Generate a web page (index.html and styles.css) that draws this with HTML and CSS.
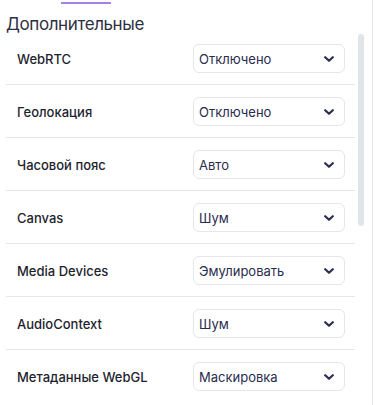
FILE: index.html
```html
<!DOCTYPE html>
<html lang="ru">
<head>
<meta charset="utf-8">
<link rel="stylesheet" href="styles.css">
</head>
<body>
<div class="layout">
  <main class="panel">
    <div class="tabs"><span class="tab-active"></span></div>
    <h2 class="title">Дополнительные</h2>
    <div class="body">
      <div class="list">
        <div class="row"><span class="label">WebRTC</span><div class="select"><span>Отключено</span><svg class="chev" viewBox="0 0 10 6"><path d="M1.2 1.2L5 4.8l3.8-3.6"/></svg></div></div>
        <div class="row"><span class="label">Геолокация</span><div class="select"><span>Отключено</span><svg class="chev" viewBox="0 0 10 6"><path d="M1.2 1.2L5 4.8l3.8-3.6"/></svg></div></div>
        <div class="row"><span class="label">Часовой пояс</span><div class="select"><span>Авто</span><svg class="chev" viewBox="0 0 10 6"><path d="M1.2 1.2L5 4.8l3.8-3.6"/></svg></div></div>
        <div class="row"><span class="label">Canvas</span><div class="select"><span>Шум</span><svg class="chev" viewBox="0 0 10 6"><path d="M1.2 1.2L5 4.8l3.8-3.6"/></svg></div></div>
        <div class="row"><span class="label">Media Devices</span><div class="select"><span>Эмулировать</span><svg class="chev" viewBox="0 0 10 6"><path d="M1.2 1.2L5 4.8l3.8-3.6"/></svg></div></div>
        <div class="row"><span class="label">AudioContext</span><div class="select"><span>Шум</span><svg class="chev" viewBox="0 0 10 6"><path d="M1.2 1.2L5 4.8l3.8-3.6"/></svg></div></div>
        <div class="row"><span class="label">Метаданные WebGL</span><div class="select"><span>Маскировка</span><svg class="chev" viewBox="0 0 10 6"><path d="M1.2 1.2L5 4.8l3.8-3.6"/></svg></div></div>
      </div>
      <div class="scroll"><div class="thumb"></div></div>
    </div>
  </main>
</div>
</body>
</html>
```
FILE: styles.css
```css
html, body {
  margin: 0;
  padding: 0;
  background: #ffffff;
  height: 100%;
  overflow: hidden;
}
body {
  font-family: Inter, "Noto Sans", sans-serif;
  color: #1f2030;
}
.layout {
  display: flex;
  height: 405px;
}
.panel {
  width: 366px;
  padding-left: 6px;
  border-right: 1px solid #e4e6eb;
  box-sizing: content-box;
}
.tabs {
  height: 4px;
  padding-top: 2px;
  box-sizing: border-box;
}
.tab-active {
  display: block;
  margin-left: 55px;
  width: 50px;
  height: 2px;
  background: #a77fe6;
}
.title {
  margin: 0;
  padding-top: 13px;
  height: 28px;
  box-sizing: border-box;
  font-size: 17px;
  line-height: 15px;
  font-weight: 400;
  color: #2e3042;
  letter-spacing: -0.4px;
}
.body {
  display: flex;
}
.list {
  width: 349px;
}
.row {
  display: flex;
  align-items: center;
  justify-content: space-between;
  padding: 12px 10px 11px 11px;
  border-bottom: 1px solid #e4e6eb;
}
.row:last-child {
  border-bottom: none;
}
.label {
  font-size: 13px;
  font-weight: 500;
  color: #1e1f2e;
}
.select {
  width: 152px;
  height: 29px;
  box-sizing: border-box;
  border: 1px solid #e4e6eb;
  border-radius: 6px;
  display: flex;
  align-items: center;
  justify-content: space-between;
  padding: 0 10px 0 5px;
  font-size: 13px;
  color: #2a2c4d;
}
.chev {
  width: 10px;
  height: 6px;
  fill: none;
  stroke: #2b2f50;
  stroke-width: 2.2;
  stroke-linecap: round;
  stroke-linejoin: round;
}
.scroll {
  width: 6px;
  margin-left: 3px;
}
.thumb {
  margin-top: 2px;
  height: 192px;
  border-radius: 3px;
  background: #e1e4e9;
}
```
